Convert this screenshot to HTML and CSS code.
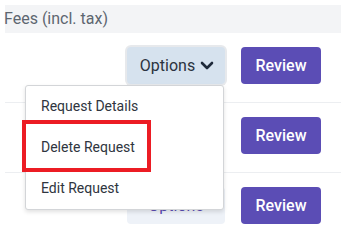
FILE: index.html
```html
<!DOCTYPE html>
<html lang="en">
<head>
    <meta charset="UTF-8">
    <meta name="viewport" content="width=device-width, initial-scale=1.0">
    <title>Requests</title>
    <link rel="stylesheet" href="styles.css">
</head>
<body>
    <div class="table">
        <div class="head">Fees (incl. tax)</div>

        <div class="row">
            <div class="options-wrap">
                <button class="btn-options open">Options
                    <svg class="chevron" width="14" height="10" viewBox="0 0 14 10"><polyline points="2,2 7,7 12,2" fill="none" stroke="#1f2a3a" stroke-width="2.6" stroke-linecap="round" stroke-linejoin="round"/></svg>
                </button>
                <div class="menu">
                    <div class="menu-item">Request Details</div>
                    <div class="menu-item">Delete Request</div>
                    <div class="menu-item">Edit Request</div>
                    <div class="callout"></div>
                </div>
            </div>
            <button class="btn-review">Review</button>
        </div>

        <div class="row">
            <div class="options-wrap">
                <button class="btn-options hidden">Options</button>
            </div>
            <button class="btn-review">Review</button>
        </div>

        <div class="row">
            <div class="options-wrap">
                <button class="btn-options">Options</button>
            </div>
            <button class="btn-review">Review</button>
        </div>
    </div>
</body>
</html>
```

FILE: styles.css
```css
body, html {
    margin: 0;
    padding: 0;
    overflow: hidden;
}
body {
    font-family: Roboto, "Liberation Sans", sans-serif;
    color: #333;
    background: #fff;
}
.table {
    padding: 5px 0 0 5px;
}
.head {
    background-color: #f3f4f6;
    height: 28px;
    line-height: 28px;
    font-size: 16px;
    color: #5d6670;
    text-indent: -1px;
}
.row {
    display: flex;
    justify-content: flex-end;
    align-items: center;
    gap: 16px;
    padding: 14px 20px 18px 0;
    border-bottom: 1px solid #eceef1;
}
.row:last-child {
    border-bottom: none;
}
.options-wrap {
    position: relative;
}
button {
    font-family: inherit;
    font-size: 16px;
    border: none;
    border-radius: 4px;
    height: 37px;
    padding: 0;
    cursor: pointer;
}
.btn-options {
    width: 98px;
    background-color: #eef2f8;
    color: #5b4cb5;
    display: flex;
    align-items: center;
    justify-content: center;
    gap: 5px;
}
.btn-options.open {
    background-color: #d6e2ee;
    color: #2b3340;
    box-shadow: 0 0 0 2px #e7e9ec;
    padding-left: 2px;
}
.btn-options.hidden {
    visibility: hidden;
}
.chevron {
    display: block;
}
.btn-review {
    width: 80px;
    background-color: #5b4db5;
    color: #fff;
    font-weight: 500;
}
.menu {
    position: absolute;
    top: 38px;
    right: 1px;
    width: 199px;
    background: #fff;
    border: 1px solid #d3d5d8;
    border-radius: 3px;
    box-shadow: 0 2px 4px rgba(0, 0, 0, 0.12);
    box-sizing: border-box;
    z-index: 10;
}
.menu-item {
    height: 41px;
    line-height: 41px;
    padding: 0 15px;
    font-size: 14px;
    color: #2f3540;
}
.callout {
    position: absolute;
    left: -4px;
    top: 34px;
    width: 129px;
    height: 52px;
    border: 4px solid #ec1c24;
    box-sizing: border-box;
}
```
